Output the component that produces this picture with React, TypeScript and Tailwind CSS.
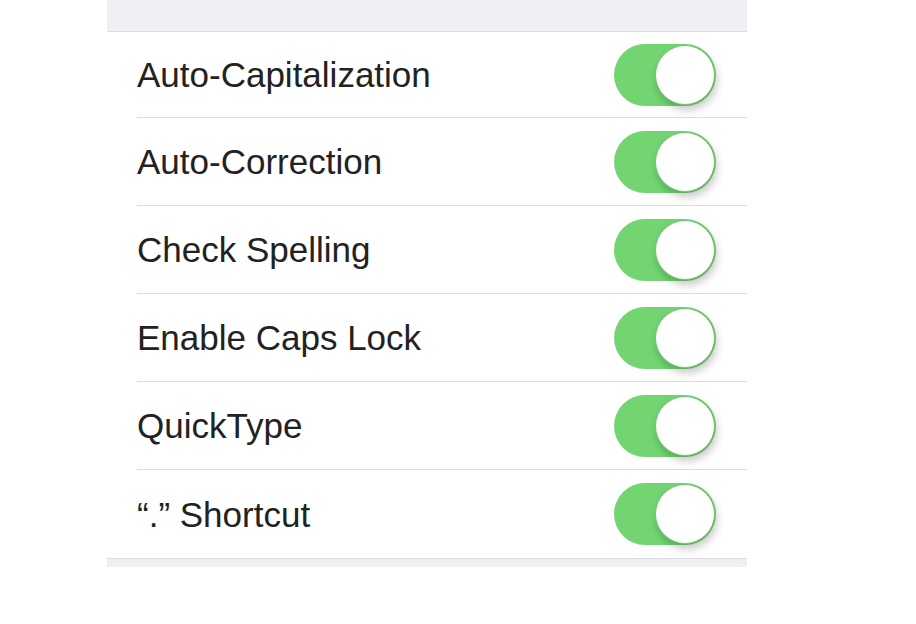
import React from "react";

const Toggle = () => {
  return (
    <div className="relative h-[62px] w-[102px] shrink-0 rounded-full bg-[#72d572]">
      <div className="absolute right-[1px] top-[1px] h-[60px] w-[60px] rounded-full border-[1.5px] border-[#6cc86c] bg-white shadow-[2px_5px_8px_rgba(0,0,0,0.22)]"></div>
    </div>
  );
};

const Row = ({ label, first, last }: any) => {
  return (
    <div className={"flex items-center pl-[30px] " + (first ? "h-[86px]" : "h-[88px]")}>
      <div
        className={
          "flex h-full flex-1 items-center justify-between pr-[31px] " +
          (last ? "" : "border-b border-[#dedee2]")
        }
      >
        <span className="text-[35px] leading-none text-[#222]">{label}</span>
        <Toggle />
      </div>
    </div>
  );
};

const rows = [
  "Auto-Capitalization",
  "Auto-Correction",
  "Check Spelling",
  "Enable Caps Lock",
  "QuickType",
  "\u201c.\u201d Shortcut",
];

const App = () => {
  return (
    <main
      className="h-[624px] w-[916px] bg-white"
      style={{ fontFamily: '"Liberation Sans", Arial, sans-serif' }}
    >
      <div className="ml-[107px] w-[640px]">
        <div className="h-[31px] bg-[#efeff4]"></div>
        <div className="border-y-[1.5px] border-[#dcdce0] bg-white">
          {rows.map((r, i) => (
            <Row key={r} label={r} first={i === 0} last={i === rows.length - 1} />
          ))}
        </div>
        <div className="h-[8px] bg-[#efeff4]"></div>
      </div>
    </main>
  );
};

export default App;
